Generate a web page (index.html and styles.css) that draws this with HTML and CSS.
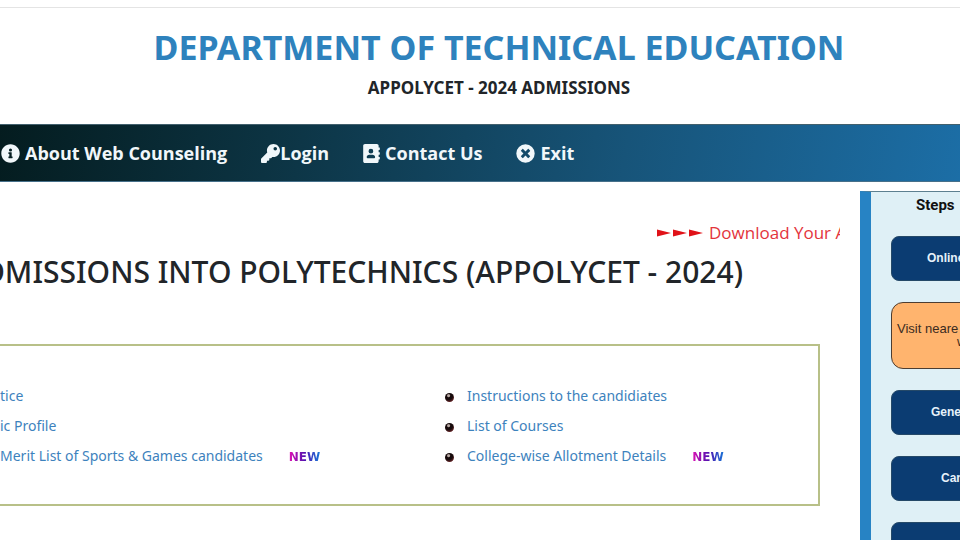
FILE: index.html
```html
<!DOCTYPE html>
<html lang="en">
<head>
<meta charset="utf-8">
<title>APPOLYCET - 2024</title>
<link rel="stylesheet" href="styles.css">
</head>
<body>
<header class="masthead">
  <h1>DEPARTMENT OF TECHNICAL EDUCATION</h1>
  <p>APPOLYCET - 2024 ADMISSIONS</p>
</header>
<nav class="menu">
  <a href="#"><svg viewBox="0 0 512 512" class="icon gap"><path fill="currentColor" fill-rule="evenodd" d="M256 8C119 8 8 119 8 256s111 248 248 248 248-111 248-248S393 8 256 8zm0 110a42 42 0 1 1 0 84 42 42 0 0 1 0-84zm56 254c0 7-5 12-12 12h-88c-7 0-12-5-12-12v-24c0-7 5-12 12-12h12v-64h-12c-7 0-12-5-12-12v-24c0-7 5-12 12-12h64c7 0 12 5 12 12v100h12c7 0 12 5 12 12z"/></svg>About Web Counseling</a>
  <a href="#"><svg viewBox="0 0 512 512" class="icon"><path fill="currentColor" fill-rule="evenodd" d="M512 176c0 97-79 176-176 176-11 0-22-1-33-3l-24 27c-5 5-11 8-18 8h-37v40c0 13-11 24-24 24h-40v40c0 13-11 24-24 24H24c-13 0-24-11-24-24v-78c0-6 3-12 7-17l162-162c-6-17-9-36-9-55C160 79 239 0 336 0s176 79 176 176zM336 128a48 48 0 1 0 96 0 48 48 0 0 0-96 0z"/></svg>Login</a>
  <a href="#"><svg viewBox="0 0 448 512" class="icon book gap"><path fill="currentColor" fill-rule="evenodd" d="M436 160c7 0 12-5 12-12v-40c0-7-5-12-12-12h-20V48c0-26-22-48-48-48H48C22 0 0 22 0 48v416c0 26 22 48 48 48h320c26 0 48-22 48-48v-48h20c7 0 12-5 12-12v-40c0-7-5-12-12-12h-20v-64h20c7 0 12-5 12-12v-40c0-7-5-12-12-12h-20v-64zM208 128a64 64 0 1 1 0 128 64 64 0 0 1 0-128zm112 237c0 11-10 19-22 19H118c-12 0-22-8-22-19v-19c0-32 30-58 67-58h90c37 0 67 26 67 58z"/></svg>Contact Us</a>
  <a href="#"><svg viewBox="0 0 512 512" class="icon gap"><path fill="currentColor" fill-rule="evenodd" d="M256 8a248 248 0 1 0 0 496 248 248 0 0 0 0-496zm122 313c4 5 4 12 0 17l-40 39c-5 5-12 5-17 0l-65-66-65 66c-5 5-12 5-17 0l-39-40c-5-5-5-12 0-17l66-64-66-65c-5-5-5-12 0-17l40-40c5-5 12-5 17 0l64 67 65-66c5-5 12-5 17 0l40 40c4 5 4 12 0 17l-67 64z"/></svg>Exit</a>
</nav>
<div class="page">
  <main>
    <div class="ticker">
      <svg class="arrows" viewBox="0 0 47 8" aria-hidden="true"><path fill="#e01218" d="M0 0.500L14 4L0 7.500zM16 0.500L30 4L16 7.500zM32 0.500L46 4L32 7.500z"/></svg>
      <span>Download Your A</span>
    </div>
    <div class="headline"><h2>DMISSIONS INTO POLYTECHNICS (APPOLYCET - 2024)</h2></div>
    <section class="links">
      <ul>
        <li><a href="#">tice</a></li>
        <li><a href="#">ic Profile</a></li>
        <li><a href="#">Merit List of Sports &amp; Games candidates</a><span class="new">NEW</span></li>
      </ul>
      <ul>
        <li><i class="ball"></i><a href="#">Instructions to the candidiates</a></li>
        <li><i class="ball"></i><a href="#">List of Courses</a></li>
        <li><i class="ball"></i><a href="#">College-wise Allotment Details</a><span class="new">NEW</span></li>
      </ul>
    </section>
  </main>
  <aside class="steps">
    <h3>Steps</h3>
    <button type="button" class="pay">Online</button>
    <button type="button" class="visit"><span>Visit neare</span><span class="second">w</span></button>
    <button type="button" class="general">Gene</button>
    <button type="button" class="candidate">Can</button>
    <button type="button" aria-label="Next step"></button>
  </aside>
</div>
</body>
</html>
```
FILE: styles.css
```css
* { box-sizing: border-box; }
html, body { height: 100%; }
body {
  margin: 0;
  display: flex;
  flex-direction: column;
  overflow: hidden;
  background: #fff;
  color: #212529;
  font-family: "Noto Sans", "Open Sans", sans-serif;
}
h1, h2, h3, p, ul { margin: 0; padding: 0; }
a { text-decoration: none; }
.masthead {
  margin-top: 7px;
  border-top: 1px solid #e4e4e4;
  padding: 15px 0 22px 38px;
  text-align: center;
  white-space: nowrap;
}
.masthead h1 { color: #2e82bd; font-size: 34px; line-height: 48px; font-weight: 700; }
.masthead p { margin-top: 3px; font-size: 17px; line-height: 28px; font-weight: 700; }
.menu {
  display: flex;
  flex: none;
  gap: 34px;
  height: 58px;
  padding-left: 1px;
  align-items: center;
  border-top: 1px solid #42606d;
  border-bottom: 1px solid #46708a;
  background: linear-gradient(100deg, #041c1f 0%, #0c3342 28%, #175479 65%, #1c6ea6 100%);
}
.menu a {
  display: flex;
  align-items: center;
  color: #f1f7fa;
  font-family: "Open Sans", "Noto Sans", sans-serif;
  font-size: 18px;
  font-weight: 700;
  white-space: nowrap;
}
.icon { width: 19px; height: 19px; }
.book { width: 17px; }
.gap { margin-right: 5px; }
.page {
  flex: 1;
  min-height: 0;
  display: grid;
  grid-template-columns: minmax(0, 1fr) 100px;
}
main { padding: 38px 20px 0 0; }
.ticker {
  display: flex;
  align-items: center;
  margin-left: auto;
  width: 183px;
  overflow: hidden;
  white-space: nowrap;
  color: #e3343c;
  font-family: "Open Sans", "Noto Sans", sans-serif;
  font-size: 17px;
  line-height: 26px;
}
.arrows { flex: none; width: 47px; height: 8px; margin-right: 5px; }
.headline {
  display: flex;
  justify-content: flex-end;
  overflow: hidden;
  padding: 6px 97px 0 0;
}
.headline h2 { flex: none; font-size: 30px; line-height: 40px; font-weight: 500; white-space: nowrap; }
.links {
  display: grid;
  grid-template-columns: minmax(0, 445fr) minmax(0, 373fr);
  margin: 52px 20px 0 0;
  padding: 34px 0;
  border: solid #b8c088;
  border-width: 2px 2px 2px 0;
}
.links ul { list-style: none; }
.links li { display: flex; align-items: center; height: 30px; white-space: nowrap; font-size: 14px; }
.links a { color: #3d82bd; }
.ball {
  width: 9px;
  height: 9px;
  margin: 4px 13px 0 0;
  border-radius: 50%;
  background: radial-gradient(circle at 40% 30%, #b8aaa5 0 1px, #170b0c 2px 4px, #5b2023 6px);
}
.new {
  margin: 4px 0 0 26px;
  font: 700 12px/12px "DejaVu Sans", sans-serif;
  color: transparent;
  background: linear-gradient(90deg, #e012b4, #5512b0 50%, #1677d8);
  background-clip: text;
}
.steps {
  margin-top: 9px;
  padding: 0 0 0 20px;
  border-left: 11px solid #2783c4;
  border-top: 1px solid #5d8090;
  background: #dff0f6;
  overflow: hidden;
  font-family: "Liberation Sans", sans-serif;
}
.steps h3 {
  padding-left: 25px;
  color: #111;
  font: 700 15px/26px Roboto, sans-serif;
}
.steps button {
  display: block;
  width: 170px;
  height: 45px;
  margin-bottom: 21px;
  padding: 0;
  border: 1px solid #254968;
  border-radius: 8px;
  background: #0b3c72;
  color: #e6f1fa;
  font: 700 12px/13px "Liberation Sans", sans-serif;
  text-align: left;
}
.steps h3 + button { margin-top: 18px; }
.steps .visit {
  height: 67px;
  padding: 0 0 2px 5px;
  border-color: #4d3d31;
  border-radius: 12px;
  background: #ffb46e;
  color: #3b2b1f;
  font-size: 13px;
  font-weight: 400;
}
.visit span { display: block; }
.visit .second { padding-left: 60px; }
.steps .pay { padding-left: 35px; }
.steps .general { padding-left: 39px; }
.steps .candidate { padding-left: 49px; }
```
